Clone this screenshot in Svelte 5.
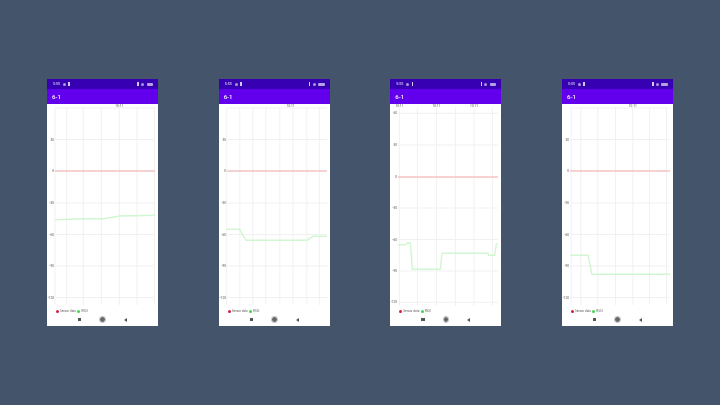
<script>
  // all chart coordinates are in px relative to the chart's top-left corner
  const yLabels = [30, 0, -30, -60, -90, -120];

  const charts = [
    {
      left: 8,
      right: 108,
      top: 4,
      bottom: 201,
      xs: [8, 19.7, 36.3, 54.3, 72.3, 90, 107.3],
      ys: [35.5, 67, 99, 130.5, 162, 193.5],
      topGrid: 4,
      ticks: [72.3],
      line: [[8, 115.7], [36.3, 114.7], [56.3, 114.7], [73, 112], [108, 111.3]]
    },
    {
      left: 8,
      right: 108,
      top: 4,
      bottom: 201,
      xs: [7.8, 20.8, 33.8, 46.8, 60.8, 74, 87.8, 100.4],
      ys: [35.5, 67, 99, 130.5, 162, 193.5],
      topGrid: 4,
      ticks: [71.6],
      line: [[7.2, 125.3], [20.4, 125.3], [27, 136.3], [88, 136.3], [93.8, 132.3], [107.8, 132.3]]
    },
    {
      left: 8,
      right: 108,
      top: 4,
      bottom: 202,
      xs: [9.4, 27.4, 46.4, 65.4, 84, 102.4],
      ys: [41, 73, 104, 135.5, 167, 198.3],
      topGrid: 9.3,
      ticks: [9.4, 46.4, 84],
      labelTop: true,
      line: [[7.4, 140.7], [15.4, 140.7], [17.4, 139], [20.4, 139], [22.4, 165.3], [50.4, 165.3], [52, 149.3], [98, 149.3], [98.7, 151.3], [104.7, 151.3], [106.4, 140], [107.7, 140]]
    },
    {
      left: 8,
      right: 107.8,
      top: 4,
      bottom: 201,
      xs: [9.2, 18.8, 35.8, 53.5, 70.8, 87.5, 104.5],
      ys: [35.5, 67, 99, 130.5, 162, 193.5],
      topGrid: 4,
      ticks: [70.8],
      line: [[8.5, 151.3], [26.2, 151.3], [29.8, 170.3], [107.8, 170.3]]
    }
  ];

  const points = (line) => line.map((p) => p.join(',')).join(' ');
</script>

<div class="page">
  {#each charts as chart}
    <section class="phone">
      <div class="status">
        <span class="time">5:55</span>
        <span class="glyph round"></span>
        <span class="glyph bar"></span>
        <span class="spacer"></span>
        <span class="glyph bar"></span>
        <span class="glyph round"></span>
        <span class="battery"></span>
      </div>
      <header class="appbar"><span class="title">6-1</span></header>

      <svg class="chart" viewBox="0 0 111 204" width="111" height="204">
        {#each chart.xs as x}
          <line class="grid" x1={x} x2={x} y1={chart.top} y2={chart.bottom} />
        {/each}
        <line class="grid" x1={chart.left} x2={chart.right} y1={chart.topGrid} y2={chart.topGrid} />
        {#if chart.labelTop}
          <text class="tick" x="7" y={chart.topGrid + 1}>60</text>
        {/if}
        {#each chart.ys as y, i}
          {#if yLabels[i] !== 0}
            <line class="grid" x1={chart.left} x2={chart.right} y1={y} y2={y} />
          {/if}
          <text class="tick" x="7" y={y + 1}>{yLabels[i]}</text>
        {/each}
        <line class="sensor" x1={chart.left} x2={chart.right} y1={chart.ys[1]} y2={chart.ys[1]} />
        <polyline class="rssi" points={points(chart.line)} />
        {#each chart.ticks as x}
          <text class="time-tick" {x} y="2.6">10:11</text>
        {/each}
      </svg>

      <div class="legend">
        <span class="dot red"></span>
        <span>Sensor data</span>
        <span class="dot green"></span>
        <span>RSSI</span>
      </div>

      <nav class="nav">
        <span class="square"></span>
        <span class="circle"></span>
        <span class="back"></span>
      </nav>
    </section>
  {/each}
</div>

<style>
  :global(body) {
    margin: 0;
    background: #44546a;
  }

  .page {
    display: flex;
    justify-content: space-between;
    align-items: center;
    width: 720px;
    height: 405px;
    box-sizing: border-box;
    padding: 0 47px;
    font-family: "Roboto", "Liberation Sans", sans-serif;
  }

  .phone {
    display: flex;
    flex-direction: column;
    width: 111px;
    height: 247px;
    background: #fff;
  }

  /* the source is a downscaled screenshot, everything in it is a little soft */
  .chart,
  .legend,
  .nav > span,
  .status > span,
  .title {
    filter: blur(0.3px);
  }

  .title {
    display: block;
  }

  .status {
    display: flex;
    align-items: center;
    height: 10px;
    padding: 0 5px 0 6px;
    background: #3700b3;
    color: #d4c8ee;
    font-size: 3.6px;
    font-weight: 500;
  }

  .time {
    margin-right: 3px;
  }

  .spacer {
    flex: 1;
  }

  .glyph {
    display: block;
    background: #d4c8ee;
  }

  .glyph.round {
    width: 3px;
    height: 3px;
    border-radius: 50%;
    opacity: 0.75;
  }

  .glyph.bar {
    width: 1.4px;
    height: 3.4px;
    margin: 0 2.4px;
  }

  .battery {
    width: 6.5px;
    height: 3px;
    margin-left: 2.5px;
    background: #d4c8ee;
    border-radius: 1px;
    opacity: 0.8;
  }

  .appbar {
    height: 15px;
    padding-left: 5px;
    background: #6200ee;
    color: #fff;
    font-size: 6px;
    font-weight: 500;
    line-height: 15px;
  }

  .chart {
    display: block;
    flex: none;
  }

  .grid {
    stroke: #f1f1f1;
    stroke-width: 1;
  }

  .sensor {
    stroke: #f2c2c2;
    stroke-width: 1.4;
  }

  .rssi {
    fill: none;
    stroke: #d2f5d2;
    stroke-width: 1.4;
  }

  .tick {
    fill: #555;
    font-size: 3.2px;
    text-anchor: end;
  }

  .time-tick {
    fill: #555;
    font-size: 3.2px;
    text-anchor: middle;
  }

  .legend {
    display: flex;
    align-items: center;
    gap: 1px;
    height: 4px;
    margin-top: 1px;
    padding-left: 9px;
    color: #666;
    font-size: 3px;
    white-space: nowrap;
  }

  .dot {
    width: 3px;
    height: 3px;
    border-radius: 50%;
  }

  .dot.red {
    background: #d81b3c;
  }

  .dot.green {
    background: #3ed84a;
    margin-left: 0.4px;
  }

  .nav {
    flex: 1;
    display: flex;
    justify-content: center;
    align-items: center;
    gap: 19px;
  }

  .square {
    width: 3.4px;
    height: 3.4px;
    background: #555;
  }

  .circle {
    width: 4.6px;
    height: 4.6px;
    border-radius: 50%;
    background: #666;
    outline: 0.6px solid #bbb;
    outline-offset: 0.4px;
  }

  .back {
    width: 0;
    height: 0;
    border-top: 2px solid transparent;
    border-bottom: 2px solid transparent;
    border-right: 3.2px solid #555;
  }
</style>
